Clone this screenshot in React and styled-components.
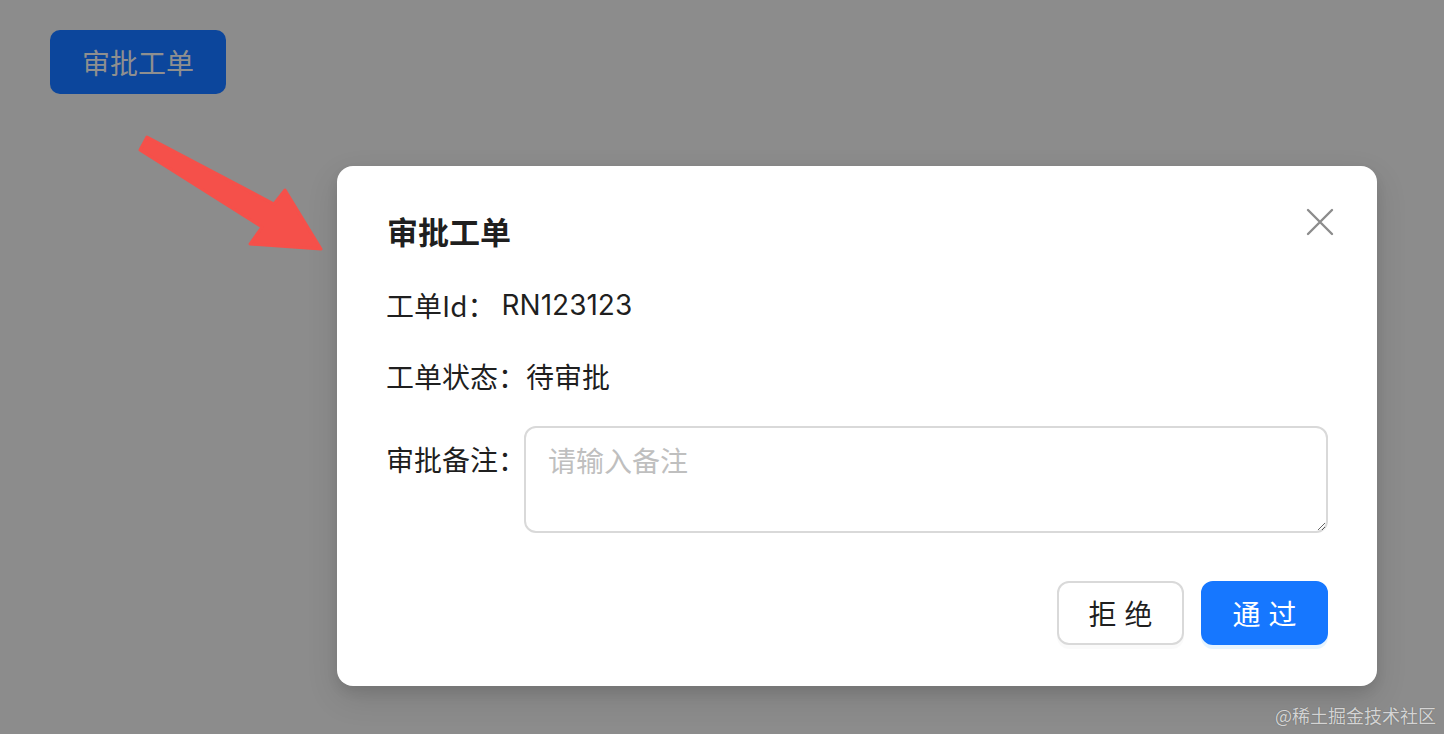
import React from "react";
import styled, { createGlobalStyle } from "styled-components";

const GlobalStyle = createGlobalStyle`
    html, body {
        margin: 0;
        padding: 0;
        background: #8c8c8c;
    }
    body {
        font-family: "Inter", "Noto Sans CJK SC", sans-serif;
        color: rgba(0, 0, 0, 0.88);
    }
`

const Page = styled.div`
    position: relative;
    width: 1444px;
    height: 734px;
    overflow: hidden;
    box-sizing: border-box;
    padding: 30px 0 0 50px;
    background: #8c8c8c;
`

const Trigger = styled.button`
    display: flex;
    align-items: center;
    justify-content: center;
    width: 176px;
    height: 64px;
    border: none;
    border-radius: 10px;
    background: #0c469c;
    color: #8f8f8f;
    font-family: "Noto Sans CJK SC", sans-serif;
    font-size: 28px;
    padding: 0;
`

const Arrow = styled.svg`
    position: absolute;
    left: 0;
    top: 0;
    pointer-events: none;
`

const Modal = styled.div`
    width: 1040px;
    height: 520px;
    margin: 72px 0 0 287px;
    box-sizing: border-box;
    padding: 40px 49px 41px 50px;
    background: #fff;
    border-radius: 16px;
    box-shadow: 0 12px 32px rgba(0, 0, 0, 0.12), 0 6px 12px rgba(0, 0, 0, 0.08);
    display: flex;
    flex-direction: column;
`

const Header = styled.div`
    display: flex;
    align-items: center;
    justify-content: space-between;
    height: 48px;
`

const Title = styled.div`
    font-family: "Noto Sans CJK SC", sans-serif;
    font-size: 31px;
    font-weight: 700;
    color: rgba(0, 0, 0, 0.88);
`

const Close = styled.svg`
    margin-right: -6px;
    margin-top: -16px;
`

const Row = styled.div`
    display: flex;
    align-items: ${(props) => (props.top ? "flex-start" : "center")};
    margin-top: ${(props) => props.gap}px;
    font-size: 28px;
    line-height: 44px;
`

const Label = styled.span`
    font-family: "Noto Sans CJK SC", sans-serif;
    padding-top: ${(props) => (props.top ? "11px" : "0")};
    margin-left: -1px;
    white-space: nowrap;
`

const Value = styled.span`
    margin-left: ${(props) => props.indent || 0}px;
    font-family: ${(props) => (props.latin ? '"Inter", sans-serif' : '"Noto Sans CJK SC", sans-serif')};
    font-size: 28px;
`

const Note = styled.textarea`
    flex: 1;
    height: 107px;
    box-sizing: border-box;
    margin-left: -2px;
    border: 2px solid #d9d9d9;
    border-radius: 12px;
    padding: 10px 22px;
    font-family: "Noto Sans CJK SC", sans-serif;
    font-size: 28px;
    line-height: 44px;
    outline: none;
    color: rgba(0, 0, 0, 0.88);

    &::placeholder {
        color: #bfbfbf;
    }
`

const Footer = styled.div`
    display: flex;
    justify-content: flex-end;
    gap: 17px;
    margin-top: auto;
`

const Btn = styled.button`
    width: 127px;
    height: 64px;
    box-sizing: border-box;
    padding: 0 0 0 8px;
    border-radius: 12px;
    font-family: "Noto Sans CJK SC", sans-serif;
    font-size: 28px;
    letter-spacing: 8px;
    border: 2px solid ${(props) => (props.primary ? "#1677ff" : "#d9d9d9")};
    background: ${(props) => (props.primary ? "#1677ff" : "#fff")};
    color: ${(props) => (props.primary ? "#fff" : "rgba(0, 0, 0, 0.88)")};
    box-shadow: ${(props) => (props.primary ? "0 4px 0 rgba(5, 145, 255, 0.1)" : "0 4px 0 rgba(0, 0, 0, 0.02)")};
`

const Watermark = styled.div`
    position: absolute;
    right: 8px;
    bottom: 6px;
    font-family: "Noto Sans CJK SC", sans-serif;
    font-size: 18px;
    color: #d4d4d4;
    text-shadow: 0 0 1px rgba(0, 0, 0, 0.35);
`

const App = () => {
    return (
        <Page>
            <GlobalStyle />
            <Trigger>审批工单</Trigger>

            <Modal>
                <Header>
                    <Title>审批工单</Title>
                    <Close width="28" height="28" viewBox="0 0 28 28">
                        <path d="M2 2 L26 26 M26 2 L2 26" stroke="#8c8c8c" strokeWidth="2.4" strokeLinecap="round" />
                    </Close>
                </Header>

                <Row gap={29}>
                    <Label>工单Id：</Label>
                    <Value latin indent={6}>RN123123</Value>
                </Row>
                <Row gap={27}>
                    <Label>工单状态：</Label>
                    <Value>待审批</Value>
                </Row>
                <Row gap={28} top>
                    <Label top>审批备注：</Label>
                    <Note placeholder="请输入备注" />
                </Row>

                <Footer>
                    <Btn>拒绝</Btn>
                    <Btn primary>通过</Btn>
                </Footer>
            </Modal>

            <Arrow width="1444" height="734">
                <polygon
                    points="147,137 274,204 285,190 321,249 250,244 262,227 140,150"
                    fill="#f5504a"
                    stroke="#f5504a"
                    strokeWidth="3"
                    strokeLinejoin="round"
                />
            </Arrow>

            <Watermark>@稀土掘金技术社区</Watermark>
        </Page>
    );
};

export default App;
